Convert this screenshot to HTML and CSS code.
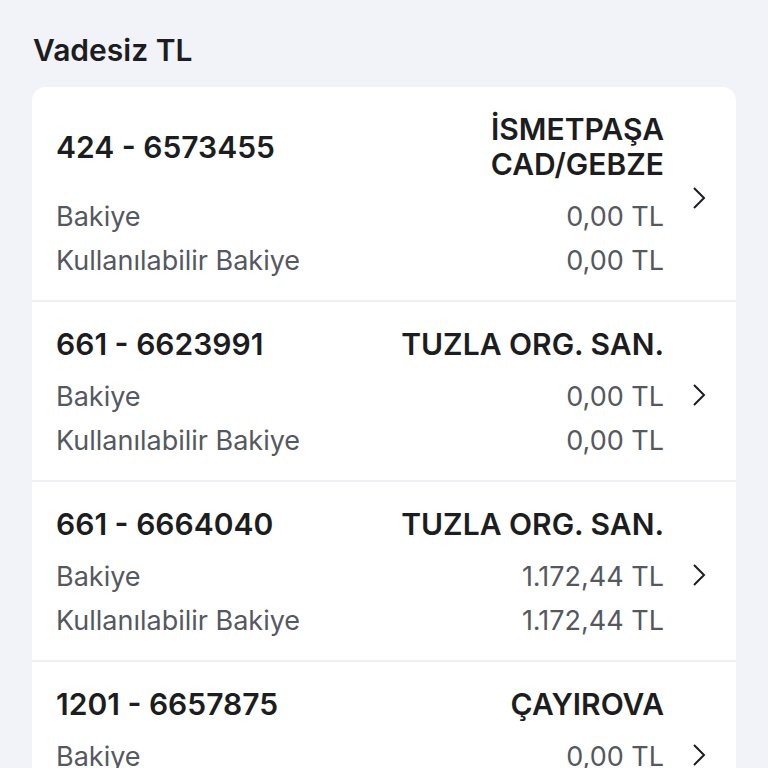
FILE: index.html
```
<!DOCTYPE html>
<html>
<head>
    <title>Vadesiz TL</title>
    <meta name="viewport" content="width=device-width, initial-scale=1">
    <link rel="stylesheet" href="styles.css">
</head>
<body>
    <div class="section">
        <h2 class="section-title">Vadesiz TL</h2>

        <div class="card">
            <div class="account">
                <div class="account-info">
                    <div class="account-head">
                        <span class="account-no">424 - 6573455</span>
                        <span class="branch">İSMETPAŞA<br>CAD/GEBZE</span>
                    </div>
                    <div class="line"><span>Bakiye</span><span>0,00 TL</span></div>
                    <div class="line"><span>Kullanılabilir Bakiye</span><span>0,00 TL</span></div>
                </div>
                <svg class="chevron" viewBox="0 0 14 24"><polyline points="2,2 12,12 2,22"/></svg>
            </div>

            <div class="account">
                <div class="account-info">
                    <div class="account-head">
                        <span class="account-no">661 - 6623991</span>
                        <span class="branch">TUZLA ORG. SAN.</span>
                    </div>
                    <div class="line"><span>Bakiye</span><span>0,00 TL</span></div>
                    <div class="line"><span>Kullanılabilir Bakiye</span><span>0,00 TL</span></div>
                </div>
                <svg class="chevron" viewBox="0 0 14 24"><polyline points="2,2 12,12 2,22"/></svg>
            </div>

            <div class="account">
                <div class="account-info">
                    <div class="account-head">
                        <span class="account-no">661 - 6664040</span>
                        <span class="branch">TUZLA ORG. SAN.</span>
                    </div>
                    <div class="line"><span>Bakiye</span><span>1.172,44 TL</span></div>
                    <div class="line"><span>Kullanılabilir Bakiye</span><span>1.172,44 TL</span></div>
                </div>
                <svg class="chevron" viewBox="0 0 14 24"><polyline points="2,2 12,12 2,22"/></svg>
            </div>

            <div class="account">
                <div class="account-info">
                    <div class="account-head">
                        <span class="account-no">1201 - 6657875</span>
                        <span class="branch">ÇAYIROVA</span>
                    </div>
                    <div class="line"><span>Bakiye</span><span>0,00 TL</span></div>
                    <div class="line"><span>Kullanılabilir Bakiye</span><span>0,00 TL</span></div>
                </div>
                <svg class="chevron" viewBox="0 0 14 24"><polyline points="2,2 12,12 2,22"/></svg>
            </div>
        </div>
    </div>
</body>
</html>
```

FILE: styles.css
```
body {
    font-family: Inter, "Noto Sans", sans-serif;
    background-color: #f2f3f8;
    color: #1c1d21;
    margin: 0;
    padding: 0;
}

.section {
    padding: 33px 32px 0 32px;
}

.section-title {
    font-size: 30px;
    font-weight: 600;
    line-height: 34px;
    margin: 0 0 20px 1px;
}

.card {
    background-color: #fff;
    border-radius: 14px;
}

.account {
    display: flex;
    align-items: center;
    padding: 25px 30px 17px 24px;
    border-bottom: 2px solid #eeeff3;
}

.account-info {
    flex: 1;
}

.account-head {
    display: flex;
    justify-content: space-between;
    align-items: center;
    margin-bottom: 13px;
}

.account-no {
    font-size: 30px;
    font-weight: 600;
    line-height: 35px;
}

.branch {
    font-size: 30px;
    font-weight: 600;
    line-height: 35px;
    text-align: right;
}

.line {
    display: flex;
    justify-content: space-between;
    font-size: 27px;
    line-height: 44px;
    color: #55585f;
}

.chevron {
    width: 14px;
    height: 24px;
    margin-left: 28px;
    fill: none;
    stroke: #1c1d21;
    stroke-width: 2;
}
```
